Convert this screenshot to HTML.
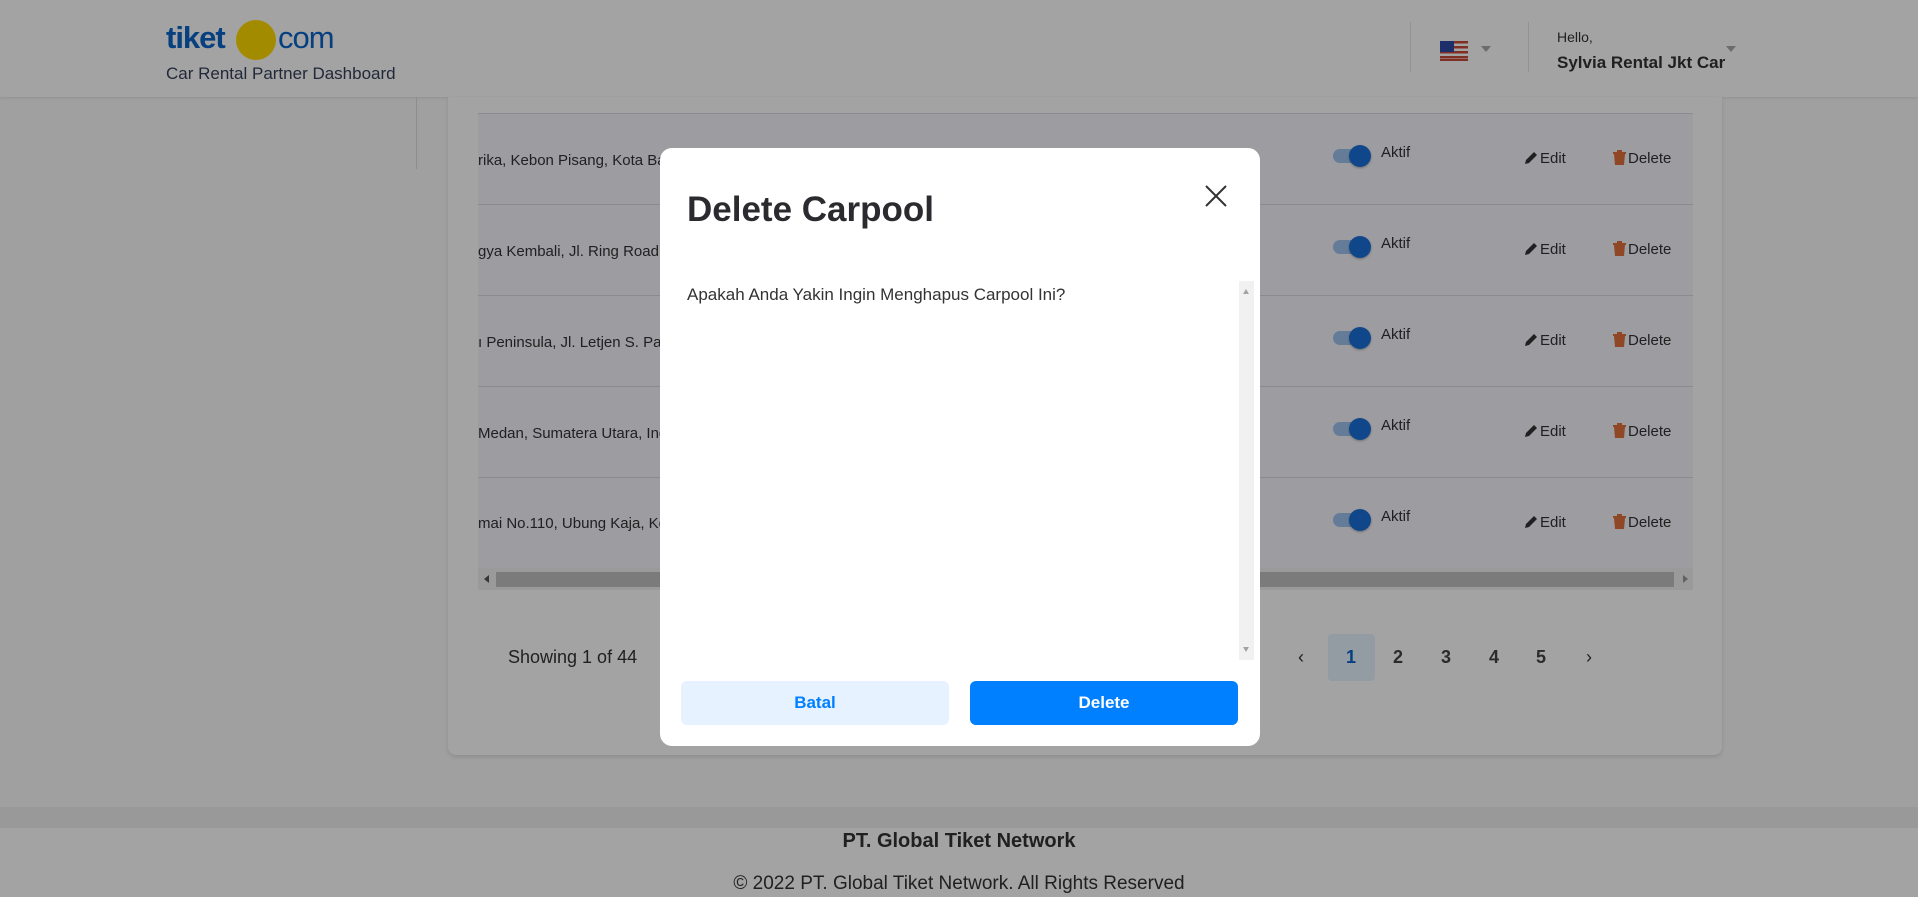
<!DOCTYPE html>
<html><head><meta charset="utf-8"><style>
*{margin:0;padding:0;box-sizing:border-box}
body{width:1918px;height:897px;overflow:hidden;background:#fafafa;font-family:"Liberation Sans",sans-serif;position:relative;color:#333}
.abs{position:absolute}
.hdr{left:0;top:0;width:1918px;height:97px;background:#fff;box-shadow:0 1px 3px rgba(0,0,0,.1)}
.card{left:448px;top:97px;width:1274px;height:658px;background:#fff;border-radius:0 0 8px 8px;box-shadow:0 2px 4px rgba(0,0,0,.12)}
.row{left:478px;width:1215px;height:91px;background:#f4f5fc;border-bottom:1px solid #d8d9e0;overflow:hidden}
.row .t{position:absolute;left:0;top:38px;font-size:15px;color:#333;white-space:nowrap}
.tg{position:absolute;left:855px;width:36px;height:14px;border-radius:7px;background:#9ec3ef}
.tg:after{content:"";position:absolute;right:-2px;top:-4px;width:22px;height:22px;border-radius:50%;background:#1a70d8;box-shadow:0 1px 2px rgba(0,0,0,.3)}
.ak{position:absolute;left:903px;font-size:15px;color:#333}
.ed{position:absolute;left:1046px;font-size:15px;color:#333}
.dl{position:absolute;left:1135px;font-size:15px;color:#333}
.ed svg,.dl svg{vertical-align:-2px;margin-right:2px}
.ov{left:0;top:0;width:1918px;height:897px;background:rgba(0,0,0,.36)}
.pg{position:absolute;top:647px;font-size:18px;color:#444}
</style></head><body>
<div class="abs hdr">
 <div class="abs" style="left:166px;top:20px;font-size:31px;font-weight:bold;color:#0a64c8;letter-spacing:-1px">tiket</div>
 <div class="abs" style="left:236px;top:20px;width:40px;height:40px;border-radius:50%;background:#ffda00"></div>
 <div class="abs" style="left:278px;top:20px;font-size:31px;color:#0a64c8;letter-spacing:-1px">com</div>
 <div class="abs" style="left:166px;top:64px;font-size:17px;color:#35405a">Car Rental Partner Dashboard</div>
 <div class="abs" style="left:1410px;top:22px;width:1px;height:50px;background:#e5e5e5"></div>
 <div class="abs" style="left:1528px;top:22px;width:1px;height:50px;background:#e5e5e5"></div>
 <svg class="abs" style="left:1440px;top:41px" width="28" height="20" viewBox="0 0 28 20"><rect width="28" height="20" fill="#fff"/><g fill="#c84a3a"><rect y="0" width="28" height="2.5"/><rect y="5" width="28" height="2.5"/><rect y="10" width="28" height="2.5"/><rect y="15" width="28" height="2.5"/><rect y="18" width="28" height="2"/></g><rect width="14" height="11" fill="#2d4aa8"/></svg>
 <div class="abs" style="left:1481px;top:46px;border:5px solid transparent;border-top:6px solid #aaa"></div>
 <div class="abs" style="left:1557px;top:29px;font-size:14px;color:#333">Hello,</div>
 <div class="abs" style="left:1557px;top:53px;font-size:17px;font-weight:bold;color:#333">Sylvia Rental Jkt Car</div>
 <div class="abs" style="left:1726px;top:46px;border:5px solid transparent;border-top:6px solid #aaa"></div>
</div>
<div class="abs" style="left:416px;top:97px;width:1px;height:72px;background:#ddd"></div>
<div class="abs card"></div>
<div class="abs" style="left:478px;top:113px;width:1215px;height:1px;background:#d8d9e0"></div>
<div class="abs row" style="top:114px"><div class="t">rika, Kebon Pisang, Kota Bandung</div><div class="tg" style="top:35px"></div><div class="ak" style="top:30px">Aktif</div><div class="ed" style="top:36px"><svg width="14" height="14" viewBox="0 0 14 14"><path d="M1 13l1-4 8-8 3 3-8 8z" fill="#333"/></svg>Edit</div><div class="dl" style="top:36px"><svg width="13" height="15" viewBox="0 0 13 15"><path d="M0 2h13v2H0zM4 0h5v2H4zM1 4h11l-1 11H2z" fill="#e0703a"/></svg>Delete</div></div>
<div class="abs row" style="top:205px"><div class="t">gya Kembali, Jl. Ring Road</div><div class="tg" style="top:35px"></div><div class="ak" style="top:30px">Aktif</div><div class="ed" style="top:36px"><svg width="14" height="14" viewBox="0 0 14 14"><path d="M1 13l1-4 8-8 3 3-8 8z" fill="#333"/></svg>Edit</div><div class="dl" style="top:36px"><svg width="13" height="15" viewBox="0 0 13 15"><path d="M0 2h13v2H0zM4 0h5v2H4zM1 4h11l-1 11H2z" fill="#e0703a"/></svg>Delete</div></div>
<div class="abs row" style="top:296px"><div class="t">ı Peninsula, Jl. Letjen S. Parman</div><div class="tg" style="top:35px"></div><div class="ak" style="top:30px">Aktif</div><div class="ed" style="top:36px"><svg width="14" height="14" viewBox="0 0 14 14"><path d="M1 13l1-4 8-8 3 3-8 8z" fill="#333"/></svg>Edit</div><div class="dl" style="top:36px"><svg width="13" height="15" viewBox="0 0 13 15"><path d="M0 2h13v2H0zM4 0h5v2H4zM1 4h11l-1 11H2z" fill="#e0703a"/></svg>Delete</div></div>
<div class="abs row" style="top:387px"><div class="t"> Medan, Sumatera Utara, Indonesia</div><div class="tg" style="top:35px"></div><div class="ak" style="top:30px">Aktif</div><div class="ed" style="top:36px"><svg width="14" height="14" viewBox="0 0 14 14"><path d="M1 13l1-4 8-8 3 3-8 8z" fill="#333"/></svg>Edit</div><div class="dl" style="top:36px"><svg width="13" height="15" viewBox="0 0 13 15"><path d="M0 2h13v2H0zM4 0h5v2H4zM1 4h11l-1 11H2z" fill="#e0703a"/></svg>Delete</div></div>
<div class="abs row" style="top:478px;height:90px;border:none"><div class="t" style="top:37px">mai No.110, Ubung Kaja, Kec</div><div class="tg" style="top:35px"></div><div class="ak" style="top:30px">Aktif</div><div class="ed" style="top:36px"><svg width="14" height="14" viewBox="0 0 14 14"><path d="M1 13l1-4 8-8 3 3-8 8z" fill="#333"/></svg>Edit</div><div class="dl" style="top:36px"><svg width="13" height="15" viewBox="0 0 13 15"><path d="M0 2h13v2H0zM4 0h5v2H4zM1 4h11l-1 11H2z" fill="#e0703a"/></svg>Delete</div></div>
<div class="abs" style="left:478px;top:568px;width:1215px;height:22px;background:#f1f1f1"></div>
<div class="abs" style="left:496px;top:572px;width:1178px;height:15px;background:#c1c1c1"></div>
<div class="abs" style="left:484px;top:575px;border:4px solid transparent;border-right:5px solid #555;border-left:0"></div>
<div class="abs" style="left:1683px;top:575px;border:4px solid transparent;border-left:5px solid #999;border-right:0"></div>
<div class="abs" style="left:508px;top:647px;font-size:18px;color:#333">Showing 1 of 44</div>
<div class="abs" style="left:1328px;top:634px;width:47px;height:47px;border-radius:4px;background:#e6f2ff"></div>
<div class="pg" style="left:1298px;color:#333">‹</div>
<div class="pg" style="left:1346px;color:#0a64c8;font-weight:bold">1</div>
<div class="pg" style="left:1393px;font-weight:bold">2</div>
<div class="pg" style="left:1441px;font-weight:bold">3</div>
<div class="pg" style="left:1489px;font-weight:bold">4</div>
<div class="pg" style="left:1536px;font-weight:bold">5</div>
<div class="pg" style="left:1586px;color:#333">›</div>
<div class="abs" style="left:0;top:807px;width:1918px;height:21px;background:#f0f0f0"></div>
<div class="abs" style="left:0;top:828px;width:1918px;height:69px;background:#fff"></div>
<div class="abs" style="left:0;top:830px;width:1918px;text-align:center;font-size:20px;font-weight:bold;color:#333">PT. Global Tiket Network</div>
<div class="abs" style="left:0;top:873px;width:1918px;text-align:center;font-size:19px;color:#333">© 2022 PT. Global Tiket Network. All Rights Reserved</div>
<div class="abs ov"></div>
<div class="abs" style="left:660px;top:148px;width:600px;height:598px;background:#fff;border-radius:12px">
 <div class="abs" style="left:27px;top:42px;font-size:35px;font-weight:bold;color:#2b2b2f">Delete Carpool</div>
 <svg class="abs" style="left:545px;top:37px" width="22" height="22" viewBox="0 0 22 22"><path d="M1 1L21 21M21 1L1 21" stroke="#333" stroke-width="2"/></svg>
 <div class="abs" style="left:27px;top:137px;font-size:17px;color:#333">Apakah Anda Yakin Ingin Menghapus Carpool Ini?</div>
 <div class="abs" style="left:579px;top:133px;width:15px;height:379px;background:#f1f1f1"></div>
 <div class="abs" style="left:583px;top:141px;border:3px solid transparent;border-bottom:5px solid #a3a3a3;border-top:0"></div>
 <div class="abs" style="left:583px;top:499px;border:3px solid transparent;border-top:5px solid #a3a3a3;border-bottom:0"></div>
 <div class="abs" style="left:21px;top:533px;width:268px;height:44px;border-radius:6px;background:#e6f2ff;color:#0080ff;font-weight:bold;font-size:17px;text-align:center;line-height:44px">Batal</div>
 <div class="abs" style="left:310px;top:533px;width:268px;height:44px;border-radius:6px;background:#0080ff;color:#fff;font-weight:bold;font-size:17px;text-align:center;line-height:44px">Delete</div>
</div>
</body></html>
